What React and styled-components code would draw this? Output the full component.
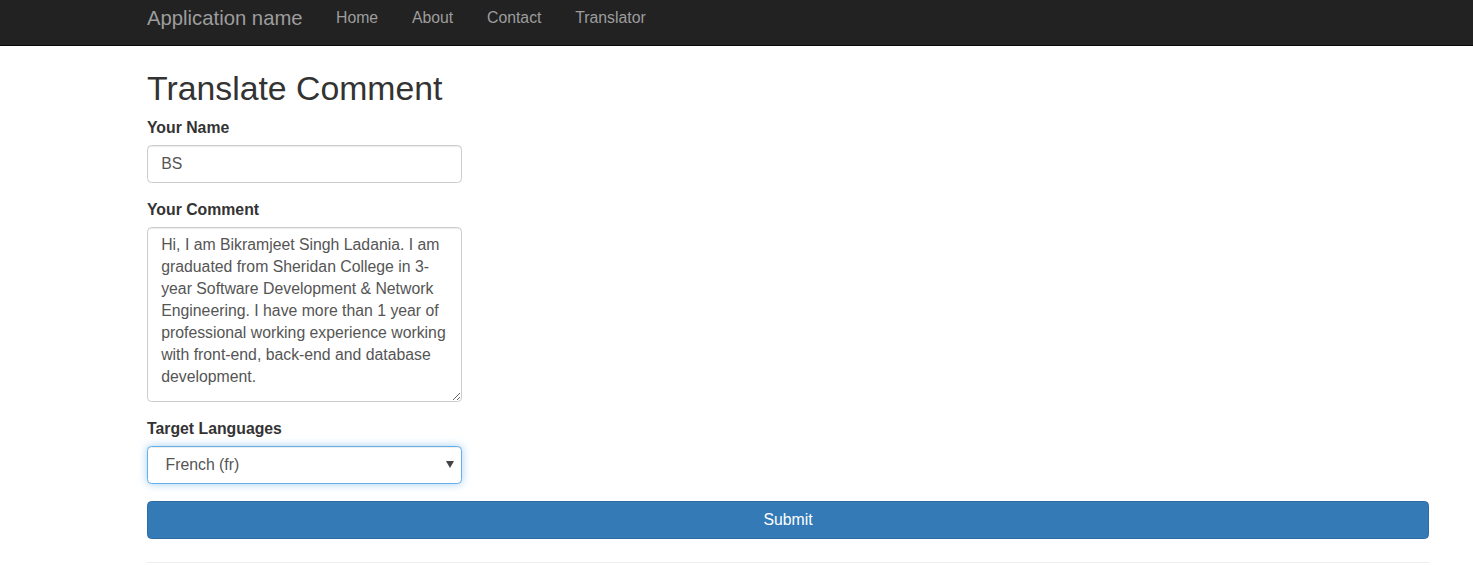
import styled, { createGlobalStyle } from 'styled-components';

const GlobalStyle = createGlobalStyle`
  html, body {
    margin: 0;
    padding: 0;
    background: #fff;
  }
  body {
    font-family: 'Liberation Sans', Arial, Helvetica, sans-serif;
    font-size: 15.8px;
    line-height: 22px;
    color: #333;
  }
  * {
    box-sizing: border-box;
  }
`;

const Navbar = styled.nav`
  height: 46px;
  background: #222;
  border-bottom: 1px solid #080808;
`;

const NavInner = styled.div`
  display: flex;
  align-items: flex-start;
  padding-left: 147px;
`;

const Brand = styled.a`
  font-size: 20.3px;
  line-height: 22px;
  padding-top: 7px;
  padding-right: 16.5px;
  color: #9d9d9d;
  text-decoration: none;
`;

const NavList = styled.ul`
  display: flex;
  list-style: none;
  margin: 0;
  padding: 0;
`;

const NavLink = styled.a`
  display: block;
  padding: 7px 16.9px 0;
  line-height: 22px;
  font-size: 15.8px;
  color: #9d9d9d;
  text-decoration: none;
`;

const Content = styled.main`
  padding: 0 44px 0 147px;
`;

const Title = styled.h2`
  font-size: 33.8px;
  font-weight: 500;
  line-height: 1.1;
  margin: 23.5px 0 10.5px;
  color: #333;
`;

const Form = styled.form`
  display: flex;
  flex-direction: column;
`;

const Group = styled.div`
  margin-bottom: ${(p) => (p.$last ? '17.5px' : '16.5px')};
`;

const Label = styled.label`
  display: block;
  font-weight: bold;
  line-height: 22px;
  margin-bottom: 5.5px;
`;

const fieldBase = `
  display: block;
  width: 315px;
  padding: 6.6px 13.2px;
  font-family: 'Liberation Sans', Arial, Helvetica, sans-serif;
  font-size: 15.8px;
  line-height: 22px;
  color: #555;
  background: #fff;
  border: 1px solid #ccc;
  border-radius: 4.4px;
  box-shadow: inset 0 1px 1px rgba(0, 0, 0, 0.075);
  outline: none;
`;

const Input = styled.input`
  ${fieldBase}
  height: 38px;
`;

const TextArea = styled.textarea`
  ${fieldBase}
  height: 175px;
  resize: vertical;
  overflow: hidden;
`;

const SelectWrap = styled.div`
  position: relative;
  width: 315px;
`;

const Select = styled.select`
  ${fieldBase}
  height: 38px;
  padding-left: 17.5px;
  appearance: none;
  -webkit-appearance: none;
  border-color: #66afe9;
  box-shadow: inset 0 1px 1px rgba(0, 0, 0, 0.075), 0 0 8px rgba(102, 175, 233, 0.6);
`;

const Arrow = styled.span`
  position: absolute;
  right: 8px;
  top: 15px;
  width: 0;
  height: 0;
  border-left: 4px solid transparent;
  border-right: 4px solid transparent;
  border-top: 7px solid #444;
  pointer-events: none;
`;

const SubmitButton = styled.button`
  display: block;
  width: 100%;
  height: 38px;
  font-family: 'Liberation Sans', Arial, Helvetica, sans-serif;
  font-size: 15.8px;
  color: #fff;
  background: #337ab7;
  border: 1px solid #2e6da4;
  border-radius: 4.4px;
  cursor: pointer;
`;

const Rule = styled.hr`
  margin: 23px 0 0;
  border: 0;
  border-top: 1px solid #eee;
`;

const comment =
  'Hi, I am Bikramjeet Singh Ladania. I am graduated from Sheridan College in 3-year Software Development & Network Engineering. I have more than 1 year of professional working experience working with front-end, back-end and database development.';

const links = ['Home', 'About', 'Contact', 'Translator'];

const App = () => {
  return (
    <>
      <GlobalStyle />
      <Navbar>
        <NavInner>
          <Brand href='#'>Application name</Brand>
          <NavList>
            {links.map((l) => (
              <li key={l}>
                <NavLink href='#'>{l}</NavLink>
              </li>
            ))}
          </NavList>
        </NavInner>
      </Navbar>
      <Content>
        <Title>Translate Comment</Title>
        <Form onSubmit={(e) => e.preventDefault()}>
          <Group>
            <Label>Your Name</Label>
            <Input defaultValue='BS' />
          </Group>
          <Group>
            <Label>Your Comment</Label>
            <TextArea defaultValue={comment} />
          </Group>
          <Group $last>
            <Label>Target Languages</Label>
            <SelectWrap>
              <Select defaultValue='fr'>
                <option value='fr'>French (fr)</option>
                <option value='es'>Spanish (es)</option>
                <option value='de'>German (de)</option>
              </Select>
              <Arrow />
            </SelectWrap>
          </Group>
          <SubmitButton type='submit'>Submit</SubmitButton>
        </Form>
        <Rule />
      </Content>
    </>
  );
};

export default App;
